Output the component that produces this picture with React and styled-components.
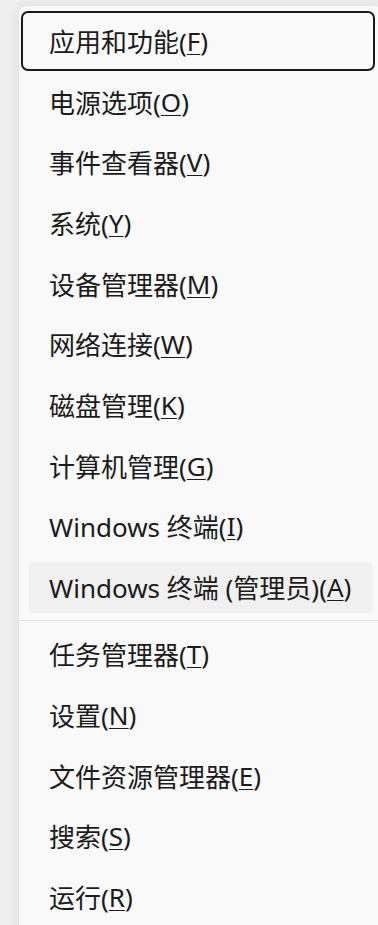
import React from 'react'
import styled, {createGlobalStyle} from 'styled-components'

const GlobalStyle = createGlobalStyle`
    html, body {
        margin:0;
        padding:0;
        background:#efefef;
        overflow:hidden;
    }
    body {
        width:378px;
        height:925px;
    }
`

const Page = styled.div`
    width:378px;
    height:925px;
    overflow:hidden;
    padding:5px 0 0 18px;
    box-sizing:border-box;
`

const Panel = styled.nav`
    width:366px;
    min-height:940px;
    box-sizing:border-box;
    padding-top:4.65px;
    background:#f9f9f9;
    border:1px solid #e4e4e4;
    border-radius:8px;
    box-shadow:0 0 14px rgba(0,0,0,0.07);
    display:flex;
    flex-direction:column;
`

const Item = styled.div`
    position:relative;
    height:51px;
    margin:4.85px 10px;
    padding:0 0 0 20px;
    box-sizing:border-box;
    display:flex;
    align-items:center;
    border-radius:5px;
    background:${p => p.hovered ? '#f0f0f0' : 'transparent'};
    font-family:"Noto Sans", "Noto Sans CJK SC", sans-serif;
    font-size:26px;
    color:#1b1b1b;
    white-space:nowrap;

    ${p => p.focused && `
        &::after{
            content:'';
            position:absolute;
            top:-4.5px;
            bottom:-4.5px;
            left:-8px;
            right:-2px;
            border:2.5px solid #1a1a1a;
            border-radius:7px;
        }
    `}
`

const Key = styled.span`
    text-decoration:underline;
    text-decoration-thickness:1px;
    text-underline-offset:3px;
`

const Separator = styled.div`
    height:1px;
    margin:2.65px 0;
    background:#e3e3e3;
`

const groups = [
    [
        {label:'应用和功能', key:'F', focused:true},
        {label:'电源选项', key:'O'},
        {label:'事件查看器', key:'V'},
        {label:'系统', key:'Y'},
        {label:'设备管理器', key:'M'},
        {label:'网络连接', key:'W'},
        {label:'磁盘管理', key:'K'},
        {label:'计算机管理', key:'G'},
        {label:'Windows 终端', key:'I'},
        {label:'Windows 终端 (管理员)', key:'A', hovered:true},
    ],
    [
        {label:'任务管理器', key:'T'},
        {label:'设置', key:'N'},
        {label:'文件资源管理器', key:'E'},
        {label:'搜索', key:'S'},
        {label:'运行', key:'R'},
    ],
]

const MenuItem = ({label, shortcut, focused, hovered}) => (
    <Item focused={focused} hovered={hovered}>
        {label}(<Key>{shortcut}</Key>)
    </Item>
)

export default function App(){
    return (
        <Page>
            <GlobalStyle/>
            <Panel>
                {groups.map((group, g) => (
                    <React.Fragment key={g}>
                        {g > 0 && <Separator/>}
                        {group.map(item => (
                            <MenuItem key={item.key} label={item.label} shortcut={item.key}
                                focused={item.focused} hovered={item.hovered}/>
                        ))}
                    </React.Fragment>
                ))}
            </Panel>
        </Page>
    )
}
